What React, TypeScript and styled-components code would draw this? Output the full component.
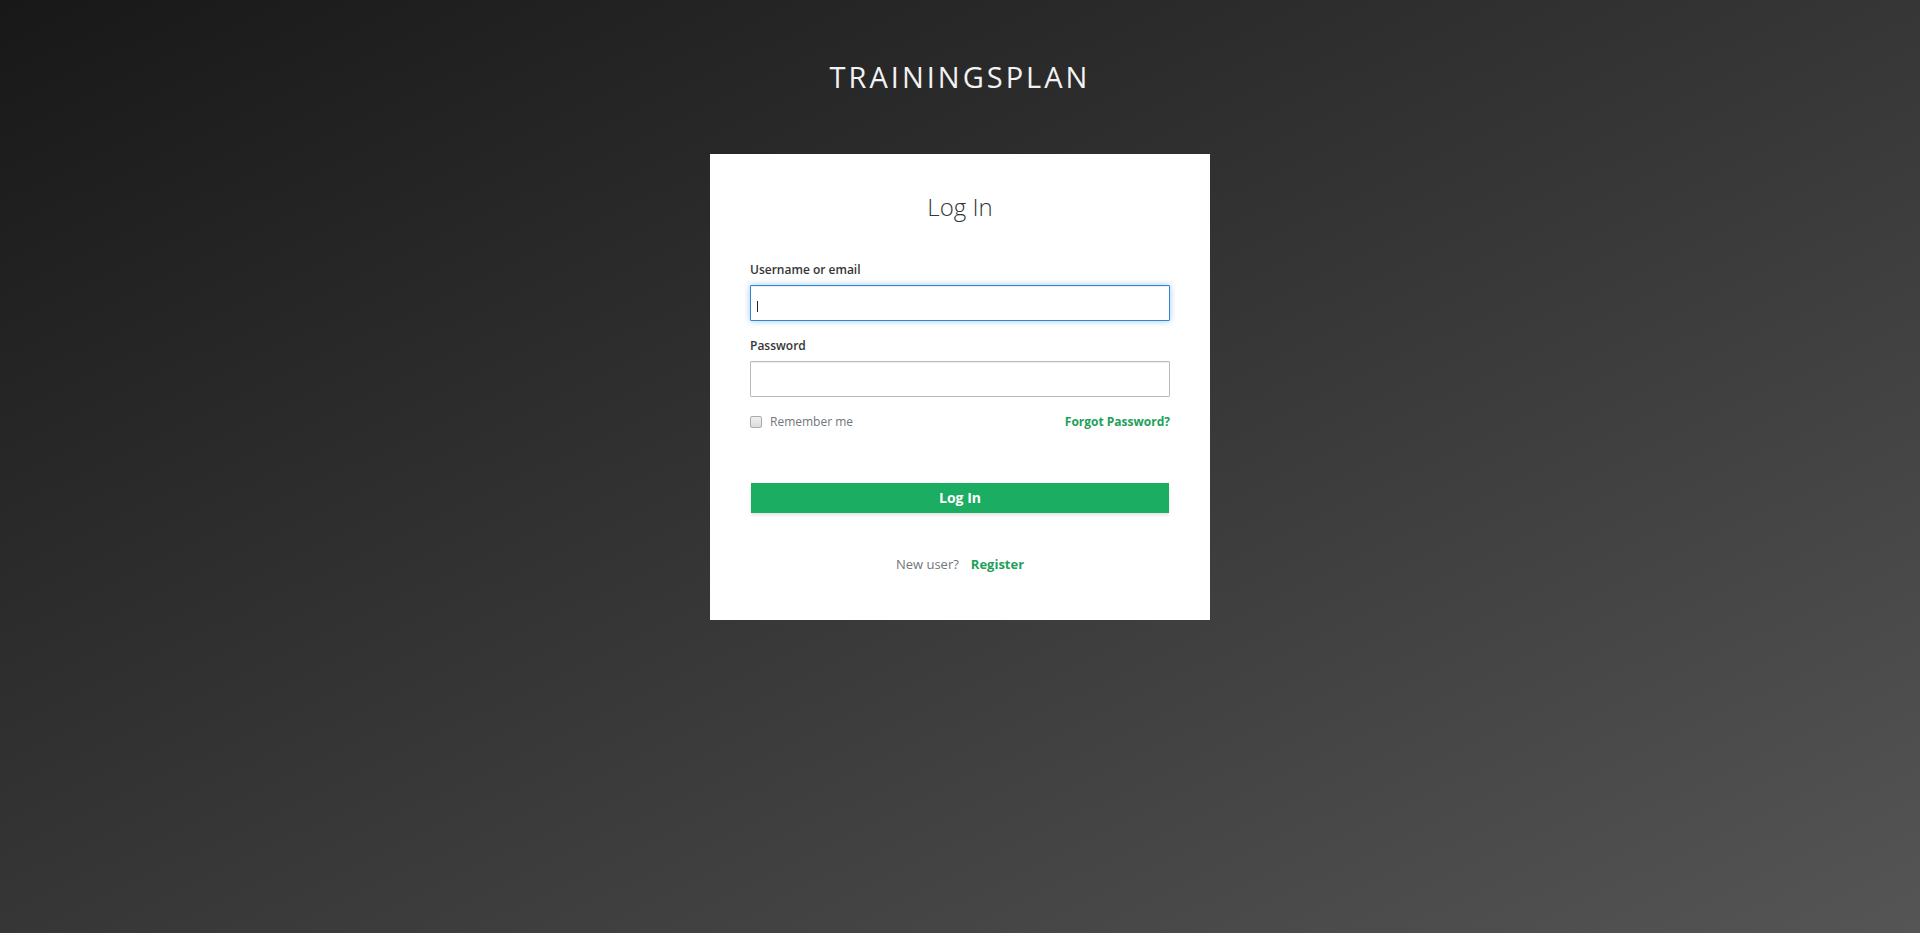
import React from "react";
import styled, { createGlobalStyle } from "styled-components";

const GlobalStyle = createGlobalStyle`
  html, body {
    margin: 0;
    padding: 0;
  }
  body {
    min-height: 100vh;
    background: linear-gradient(to bottom right, #181818 0%, #363636 50%, #555555 100%);
    font-family: "Open Sans", "Noto Sans", sans-serif;
  }
  * { box-sizing: border-box; }
`;

const Page = styled.div`
  min-height: 100vh;
  display: flex;
  flex-direction: column;
  align-items: center;
`;

const Brand = styled.div`
  padding: 60px 0 0 0;
  font-size: 29px;
  line-height: 34.8px;
  letter-spacing: 3px;
  text-transform: uppercase;
  color: #f2f2f2;
`;

const Card = styled.div`
  margin-top: 59px;
  width: 500px;
  background: #ffffff;
  padding: 39px 40px 46px;
  display: flex;
  flex-direction: column;
`;

const Title = styled.h1`
  margin: 0 0 39px;
  font-size: 24px;
  font-weight: 300;
  line-height: 28px;
  text-align: center;
  color: #363636;
`;

const Field = styled.div`
  display: flex;
  flex-direction: column;
  margin-bottom: 15px;
`;

const Label = styled.label`
  display: block;
  font-size: 12px;
  font-weight: 600;
  line-height: 20px;
  color: #363636;
  margin-bottom: 5px;
`;

const InputWrap = styled.div`
  position: relative;
`;

const Input = styled.input<{ $focused?: boolean }>`
  display: block;
  width: 100%;
  height: 36px;
  padding: 2px 6px;
  font-family: inherit;
  font-size: 12px;
  color: #363636;
  background: #fff;
  border: 1px solid ${(p) => (p.$focused ? "#2f86d4" : "#bbbbbb")};
  border-radius: 1px;
  outline: none;
  box-shadow: ${(p) =>
    p.$focused
      ? "inset 0 1px 1px rgba(3,3,3,0.075), 0 0 6px rgba(47,134,212,0.45)"
      : "inset 0 1px 1px rgba(3,3,3,0.075)"};
`;

const Caret = styled.span`
  position: absolute;
  left: 7px;
  top: 16px;
  width: 1px;
  height: 11px;
  background: #222;
`;

const OptionsRow = styled.div`
  display: flex;
  align-items: center;
  justify-content: space-between;
  height: 20px;
  margin-bottom: 51px;
`;

const Remember = styled.label`
  display: flex;
  align-items: center;
  gap: 8px;
  font-size: 12px;
  line-height: 20px;
  color: #72767b;
`;

const CheckBox = styled.span`
  display: inline-block;
  width: 12px;
  height: 12px;
  border: 1px solid #ababab;
  border-radius: 2px;
  background: linear-gradient(#f0f0f0, #dcdcdc);
`;

const GreenLink = styled.a<{ $size?: number }>`
  font-size: ${(p) => p.$size ?? 12}px;
  font-weight: 700;
  line-height: 20px;
  color: #22a05a;
  text-decoration: none;
`;

const Button = styled.button`
  margin: 0 1px 41px;
  height: 30px;
  padding: 0;
  border: none;
  background: #1bad61;
  color: #ffffff;
  font-family: inherit;
  font-size: 14px;
  font-weight: 700;
  line-height: 29px;
  box-shadow: 0 2px 3px rgba(0, 0, 0, 0.12);
  cursor: pointer;
`;

const Footer = styled.div`
  display: flex;
  justify-content: center;
  align-items: center;
  gap: 12px;
  font-size: 13px;
  line-height: 20px;
  color: #72767b;
`;

export default function App() {
  return (
    <>
      <GlobalStyle />
      <Page>
        <Brand>Trainingsplan</Brand>
        <Card>
          <Title>Log In</Title>
          <Field>
            <Label htmlFor="username">Username or email</Label>
            <InputWrap>
              <Input id="username" type="text" $focused />
              <Caret />
            </InputWrap>
          </Field>
          <Field>
            <Label htmlFor="password">Password</Label>
            <Input id="password" type="password" />
          </Field>
          <OptionsRow>
            <Remember>
              <CheckBox />
              Remember me
            </Remember>
            <GreenLink href="#">Forgot Password?</GreenLink>
          </OptionsRow>
          <Button type="button">Log In</Button>
          <Footer>
            <span>New user?</span>
            <GreenLink href="#" $size={13}>
              Register
            </GreenLink>
          </Footer>
        </Card>
      </Page>
    </>
  );
}
